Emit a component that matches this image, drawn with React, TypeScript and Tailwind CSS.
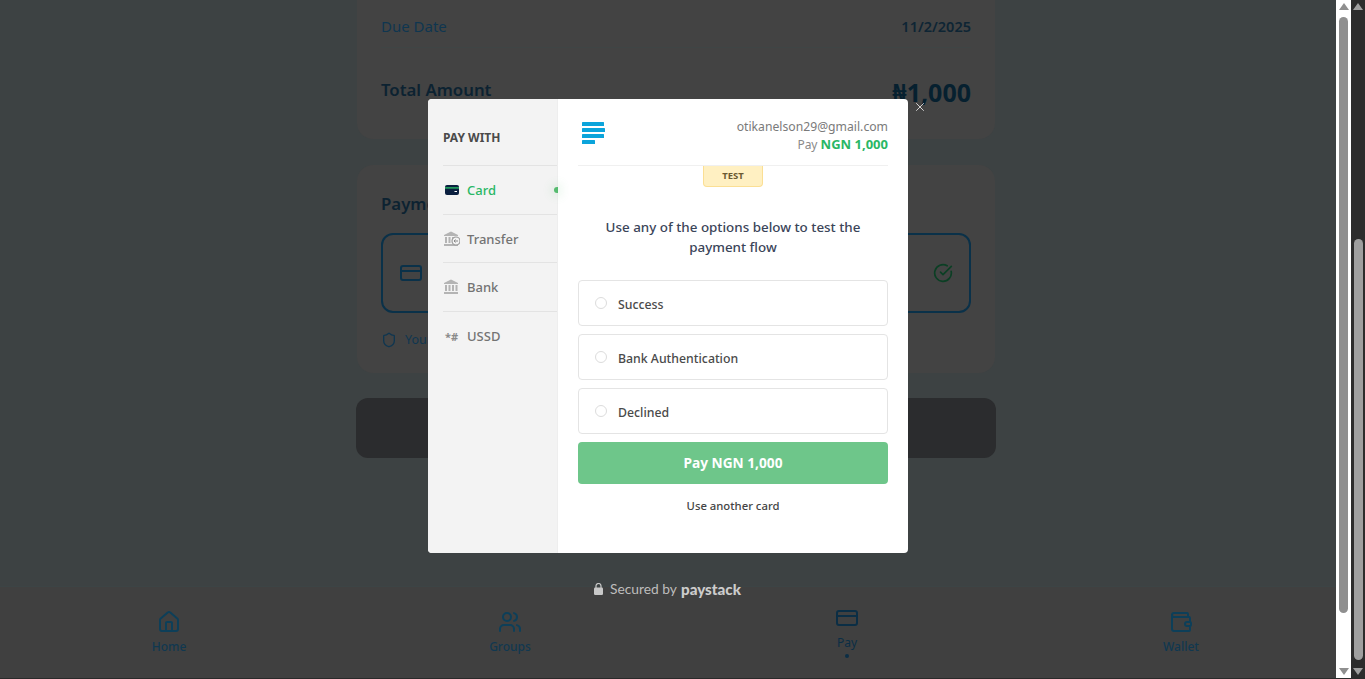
import { House, Users, CreditCard, Wallet, Shield, CircleCheckBig, X } from "lucide-react";

function CardIcon() {
  return (
    <svg width="14" height="10" viewBox="0 0 14 10">
      <rect width="14" height="10" rx="2" fill="#0b1f3f" />
      <rect y="2.2" width="14" height="1.4" fill="#29b765" />
      <rect x="9.5" y="6" width="2.5" height="1" fill="#fff" />
    </svg>
  );
}

function BankIcon({ transfer }: { transfer?: boolean }) {
  return (
    <svg width="17" height="16" viewBox="0 0 17 16" fill="#b4b4b4">
      <path d="M8 .5 15 4v1H1V4z" />
      <rect x="2" y="6" width="2" height="6" />
      <rect x="5.5" y="6" width="2" height="6" />
      <rect x="9" y="6" width="2" height="6" />
      {!transfer && <rect x="12.5" y="6" width="2" height="6" />}
      <rect x="1" y="13" width="14" height="2" />
      {transfer && (
        <>
          <circle cx="13" cy="10" r="4" fill="#f3f3f3" stroke="#9a9a9a" strokeWidth="1.2" />
          <path d="M11 10h4M12.5 8.5 11 10l1.5 1.5" fill="none" stroke="#8a8a8a" strokeWidth="1" />
        </>
      )}
    </svg>
  );
}

function LockIcon() {
  return (
    <svg width="9" height="12" viewBox="0 0 9 12">
      <path d="M2 5V3a2.5 2.5 0 0 1 5 0v2" fill="none" stroke="#c8c8c8" strokeWidth="1.2" />
      <rect y="4.6" width="9" height="7.4" rx="1.2" fill="#c8c8c8" />
    </svg>
  );
}

function PaystackLogo() {
  return (
    <svg width="23" height="22" viewBox="0 0 23 22" fill="#0ba4db">
      <rect y="0" width="22" height="4" rx="0.6" />
      <rect y="6" width="23" height="4" rx="0.6" />
      <rect y="12" width="22" height="4" rx="0.6" />
      <rect y="18" width="13" height="4" rx="0.6" />
    </svg>
  );
}

function Option({ label }: { label: string }) {
  return (
    <div className="h-[46px] rounded-[4px] border border-[#e4e4e4] flex items-center pl-4 bg-white">
      <span className="w-3 h-3 rounded-full border border-[#dcdcdc] -mt-[1px]" />
      <span className="ml-[11px] mt-[4px] text-[12.3px] font-medium text-[#4a4a4a]">{label}</span>
    </div>
  );
}

function MenuItem({ icon, label, active, h }: { icon: React.ReactNode; label: string; active?: boolean; h: string }) {
  return (
    <div className={`relative flex items-center ${h} border-t border-[#e3e3e3]`}>
      <span className="w-[17px] h-[16px] flex items-center justify-center">{icon}</span>
      <span className={`ml-[7px] text-[13px] leading-[18px] font-medium ${active ? "text-[#29b765]" : "text-[#737373]"}`}>{label}</span>
      {active && <span className="absolute -right-[1px] top-[21px] w-[4px] h-[6px] rounded-l-full bg-[#56bb6f] shadow-[0_0_8px_4px_rgba(86,187,111,0.1)]" />}
    </div>
  );
}

function NavItem({ icon, label, active, w }: { icon: React.ReactNode; label: string; active?: boolean; w: string }) {
  return (
    <div className={`${w} shrink-0 flex flex-col items-center`}>
      <div className={active ? "h-[24px] mt-[19px]" : "h-[24px] mt-[23px]"}>{icon}</div>
      <span className={`text-[12px] leading-[16px] mt-[5px] ${active ? "text-[#0b2e45]" : "font-medium text-[#103850]"}`}>{label}</span>
      {active && <span className="w-[4px] h-[4px] rounded-full bg-[#0b2e45] mt-[3px]" />}
    </div>
  );
}

function ScrollArrow({ up, color }: { up?: boolean; color: string }) {
  return (
    <svg width="10" height="7" viewBox="0 0 10 7" fill={color}>
      <path d={up ? "M5 0l5 7H0z" : "M0 0h10L5 7z"} />
    </svg>
  );
}

export default function App() {
  return (
    <div className="relative w-full h-[679px] overflow-hidden flex bg-[#3d4243] border-b border-[#2a2a2a] [font-family:'Noto_Sans','Open_Sans',sans-serif]">
      <div className="w-[1336px] shrink-0 flex flex-col overflow-hidden">
        <div className="flex-1 pl-[357px] overflow-hidden">
          <div className="w-[638px]">
            <div className="h-[139px] bg-[#434343] rounded-b-2xl px-6">
              <div className="h-[48px] border-b border-[#3f4545] flex justify-between items-center pt-[6px]">
                <span className="text-[15px] text-[#0f3650]">Due Date</span>
                <span className="text-[14.5px] font-semibold text-[#0e2534]">11/2/2025</span>
              </div>
              <div className="flex justify-between mt-[28px]">
                <span className="text-[16.8px] leading-[28px] font-semibold text-[#0c2231]">Total Amount</span>
                <span className="text-[25px] leading-[32px] font-bold text-[#06202f]">₦1,000</span>
              </div>
            </div>
            <div className="h-[208px] mt-[26px] bg-[#434343] rounded-2xl px-6 pt-[25px]">
              <div className="text-[16.8px] leading-[28px] font-semibold text-[#0c2231]">Payment Method</div>
              <div className="mt-[15px] h-[80px] rounded-xl border-2 border-[#0a3149] flex items-center justify-between px-[16px]">
                <CreditCard size={24} strokeWidth={2} className="text-[#0a3149]" />
                <CircleCheckBig size={20} strokeWidth={2} className="text-[#0b3f24]" />
              </div>
              <div className="flex items-center mt-[18px] gap-[8px]">
                <Shield size={16} strokeWidth={2} className="text-[#0f3650]" />
                <span className="text-[12.5px] text-[#0f3650]">Your payment is secure</span>
              </div>
            </div>
            <div className="w-[640px] h-[60px] mt-[25px] -ml-[1px] bg-[#2b2c2e] rounded-xl" />
          </div>
        </div>
        <div className="h-[92px] bg-[#404040] border-t border-[#3c4445] flex">
          <NavItem w="w-[338px]" icon={<House size={24} strokeWidth={2} className="text-[#0d3f59]" />} label="Home" />
          <NavItem w="w-[344px]" icon={<Users size={24} strokeWidth={2} className="text-[#0d3f59]" />} label="Groups" />
          <NavItem w="w-[330px]" active icon={<CreditCard size={24} strokeWidth={2} className="text-[#0b2e45]" />} label="Pay" />
          <NavItem w="w-[338px]" icon={<Wallet size={24} strokeWidth={2} className="text-[#0d3f59]" />} label="Wallet" />
        </div>
      </div>

      <div className="w-[15px] shrink-0 bg-white flex flex-col items-center pt-[3px] pb-[3px]">
        <ScrollArrow up color="#8f8f8f" />
        <div className="w-[9px] h-[596px] mt-[7px] bg-[#8f8f8f] rounded-[5px]" />
        <div className="flex-1" />
        <ScrollArrow color="#8f8f8f" />
      </div>
      <div className="w-[14px] shrink-0 bg-[#2c2c2c] flex flex-col items-center pt-[3px] pb-[3px]">
        <ScrollArrow up color="#9f9f9f" />
        <div className="w-[9px] h-[421px] mt-[229px] bg-[#9f9f9f] rounded-[5px]" />
        <div className="flex-1" />
        <ScrollArrow color="#9f9f9f" />
      </div>

      <div className="absolute left-[428px] top-[99px] w-[480px] h-[454px] bg-white rounded-[4px] overflow-hidden flex">
        <div className="w-[130px] bg-[#f3f3f3] pl-[15px] pt-[31px] border-r border-[#eeeeee]">
          <div className="h-[35px] text-[12px] leading-[16px] font-bold text-[#4a4a4a]">PAY WITH</div>
          <MenuItem h="h-[49px]" active icon={<CardIcon />} label="Card" />
          <MenuItem h="h-[48px] pt-[1px]" icon={<BankIcon transfer />} label="Transfer" />
          <MenuItem h="h-[49px]" icon={<BankIcon />} label="Bank" />
          <MenuItem h="h-[49px]" icon={<span className="text-[11px] leading-none font-bold text-[#8a8a8a]">*#</span>} label="USSD" />
        </div>
        <div className="w-[350px] px-5">
          <div className="h-[67px] border-b border-[#f0f0f0] flex justify-between pl-[4px] pt-[23px]">
            <PaystackLogo />
            <div className="text-right -mt-[4px]">
              <div className="text-[12.2px] leading-[18px] text-[#7a7a7a]">otikanelson29@gmail.com</div>
              <div className="text-[12px] leading-[17px] text-[#8a8a8a]">
                Pay <span className="text-[13px] font-bold text-[#29b765]">NGN 1,000</span>
              </div>
            </div>
          </div>
          <div className="w-[60px] h-[21px] mx-auto bg-[#fff0c2] border border-t-0 border-[#fbdf94] rounded-b-[4px] flex items-center justify-center text-[9.5px] font-bold text-[#6b5a33]">
            TEST
          </div>
          <div className="mt-[30px] px-6 text-center text-[13.4px] leading-[20px] font-medium text-[#3b4559]">
            Use any of the options below to test the payment flow
          </div>
          <div className="mt-[23px] flex flex-col gap-2">
            <Option label="Success" />
            <Option label="Bank Authentication" />
            <Option label="Declined" />
            <div className="h-[42px] pt-[1px] rounded-[4px] bg-[#6ec68a] flex items-center justify-center text-[13.7px] font-bold text-white">
              Pay NGN 1,000
            </div>
          </div>
          <div className="mt-[14px] text-center text-[11.3px] leading-[16px] font-medium text-[#444444]">Use another card</div>
        </div>
      </div>

      <X size={14} strokeWidth={1.3} className="absolute left-[913px] top-[100px] text-white" />

      <div className="absolute left-[594px] top-[581px] h-[16px] flex items-center [font-family:'Lato',sans-serif]">
        <LockIcon />
        <span className="ml-[7px] text-[13.8px] text-[#bdbdbd]">Secured by</span>
        <span className="ml-[4px] text-[15.2px] font-black text-[#cccccc]">paystack</span>
      </div>
    </div>
  );
}
